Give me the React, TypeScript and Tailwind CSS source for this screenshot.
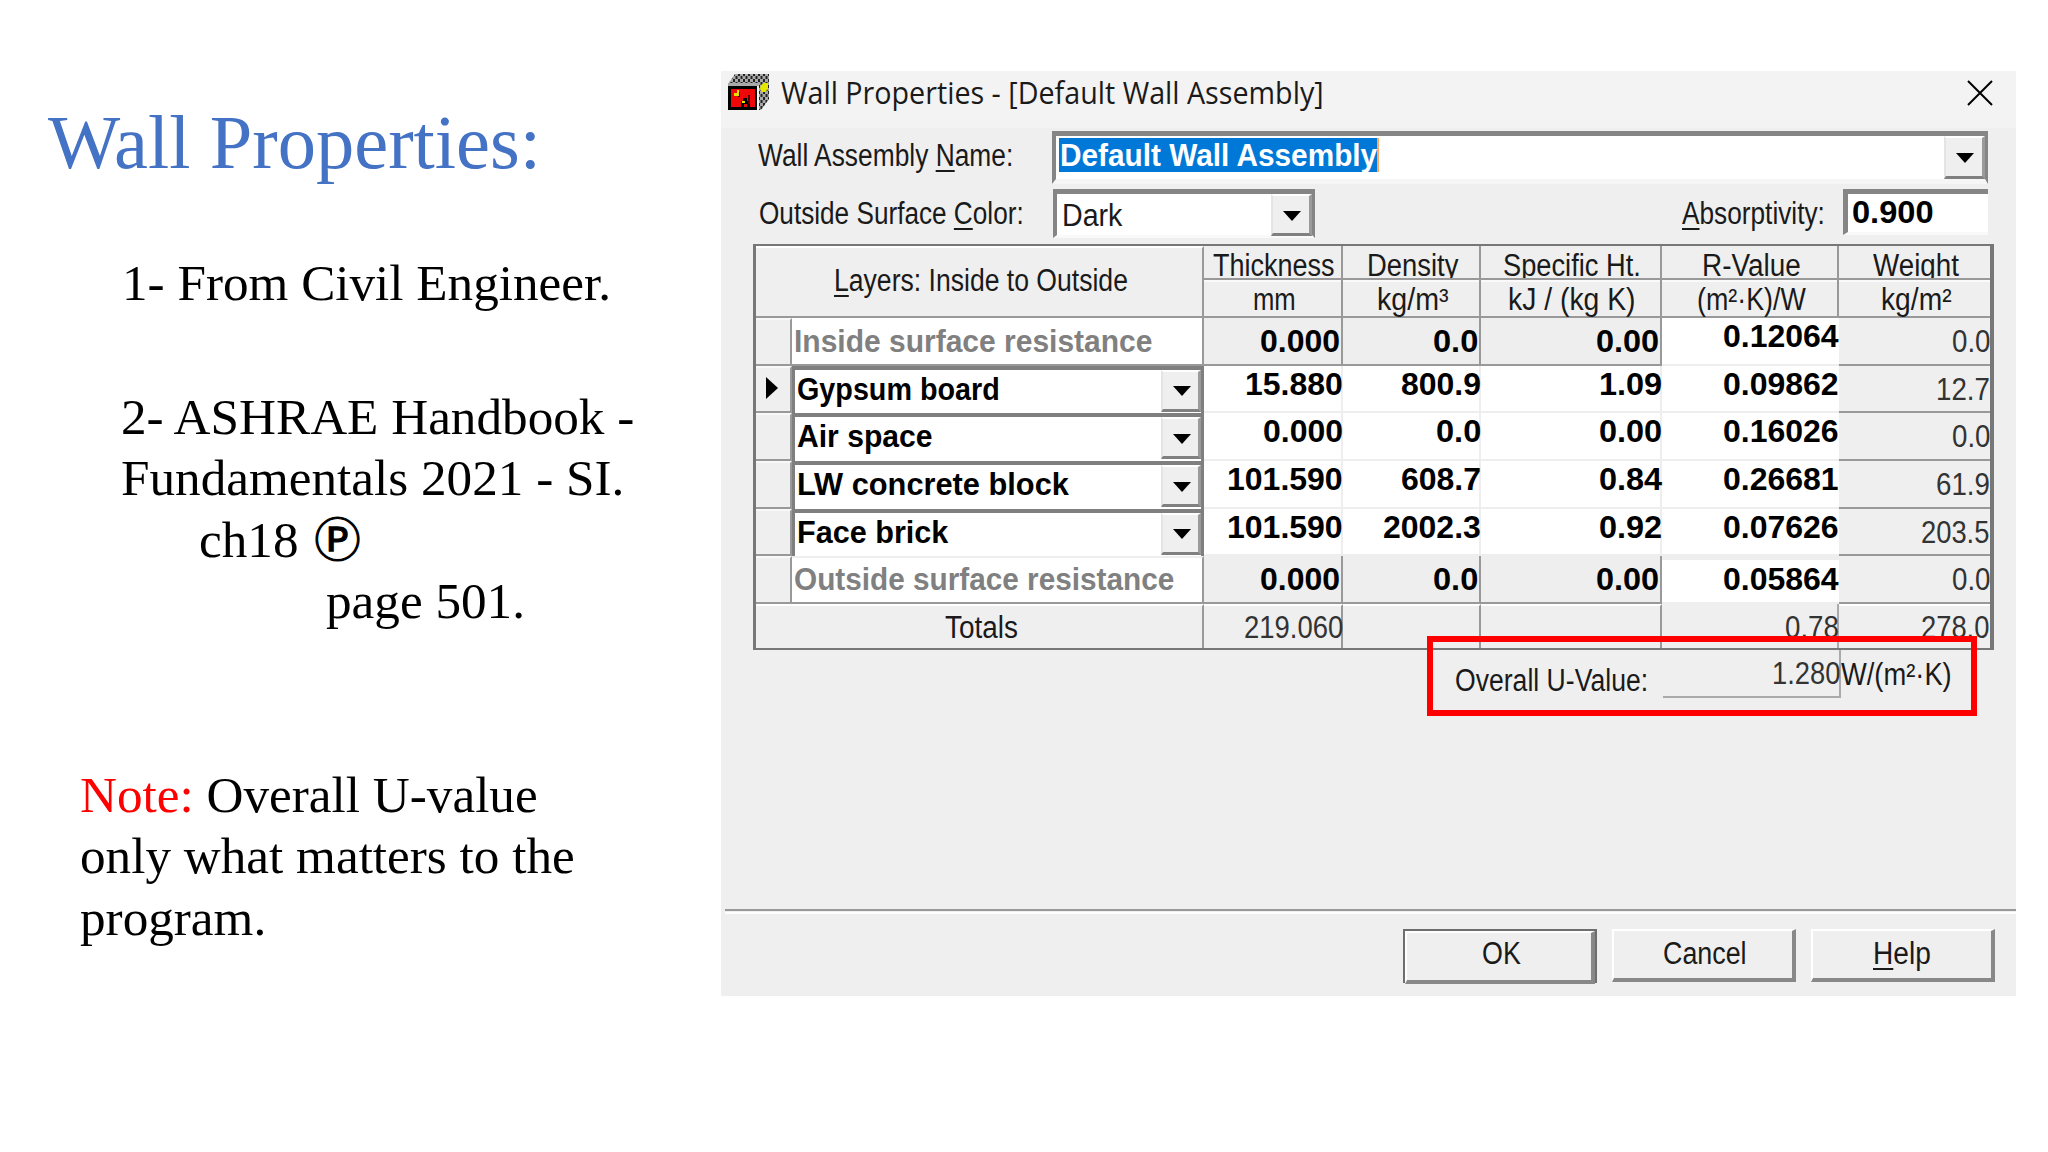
import React, { FC, ReactNode, useLayoutEffect, useRef } from "react";

// Squeezes or stretches a label horizontally so that it fills the given width
const Label: FC<{ width: number; className?: string; children: ReactNode }> = ({
  width,
  className = "",
  children,
}) => {
  const ref = useRef<HTMLSpanElement>(null);

  useLayoutEffect(() => {
    const el = ref.current;
    if (!el) return;
    el.style.transform = `scaleX(${width / el.offsetWidth})`;
  }, [width]);

  return (
    <span
      className={`block h-9 shrink-0 text-[31px] leading-[38px] whitespace-nowrap ${className}`}
      style={{ width }}
    >
      <span ref={ref} className="inline-block origin-left">
        {children}
      </span>
    </span>
  );
};

const Key: FC<{ children: ReactNode }> = ({ children }) => (
  <span className="underline decoration-2 underline-offset-[4px]">
    {children}
  </span>
);

const DropButton: FC<{ className?: string }> = ({ className = "" }) => (
  <div
    className={`flex shrink-0 items-center justify-center border-t-2 border-l-2 border-r-3 border-b-3 border-t-white border-l-[#e4e4e4] border-r-[#9a9a9a] border-b-[#808080] bg-[#efefef] ${className}`}
  >
    <svg width="20" height="12" viewBox="0 0 20 12" className="mt-0.5 ml-0.5">
      <path d="M1 1h18l-9 10z" fill="#000" />
    </svg>
  </div>
);

type Layer = {
  name: string;
  width: number;
  values: [string, string, string, string];
  weight: string;
  surface?: boolean;
};

const layers: Layer[] = [
  { name: "Inside surface resistance", width: 358, values: ["0.000", "0.0", "0.00", "0.12064"], weight: "0.0", surface: true },
  { name: "Gypsum board", width: 203, values: ["15.880", "800.9", "1.09", "0.09862"], weight: "12.7" },
  { name: "Air space", width: 136, values: ["0.000", "0.0", "0.00", "0.16026"], weight: "0.0" },
  { name: "LW concrete block", width: 272, values: ["101.590", "608.7", "0.84", "0.26681"], weight: "61.9" },
  { name: "Face brick", width: 151, values: ["101.590", "2002.3", "0.92", "0.07626"], weight: "203.5" },
  { name: "Outside surface resistance", width: 380, values: ["0.000", "0.0", "0.00", "0.05864"], weight: "0.0", surface: true },
];

const columns = [
  { title: "Thickness", titleWidth: 122, unit: "mm", unitWidth: 43 },
  { title: "Density", titleWidth: 91, unit: "kg/m³", unitWidth: 72 },
  { title: "Specific Ht.", titleWidth: 138, unit: "kJ / (kg K)", unitWidth: 128 },
  { title: "R-Value", titleWidth: 99, unit: "(m²·K)/W", unitWidth: 109 },
  { title: "Weight", titleWidth: 86, unit: "kg/m²", unitWidth: 71 },
];

const GRID = "grid grid-cols-[448px_139px_138px_181px_177px_151px]";

// A point takes half the width of a digit, the light face is narrower
const boldWidth = (text: string) => (text.length - 1) * 17.6 + 10;
const lightWidth = (text: string) => (text.length - 1) * 15.2 + 8;

const Value: FC<{ text: string }> = ({ text }) => (
  <Label width={boldWidth(text)} className="font-bold text-black">
    {text}
  </Label>
);

const LightValue: FC<{ text: string }> = ({ text }) => (
  <Label width={lightWidth(text)} className="text-[#333]">
    {text}
  </Label>
);

const LayerRow: FC<{ layer: Layer; active: boolean; last: boolean }> = ({
  layer,
  active,
  last,
}) => (
  <div className={`${GRID} h-[47.7px]`}>
    <div className="flex min-h-0">
      <div className="flex w-9 shrink-0 items-center border-r-2 border-b-2 border-[#999] border-t-2 border-t-[#f8f8f8] pl-[9px]">
        {active && (
          <svg width="14" height="24" viewBox="0 0 14 24" className="-mt-1">
            <path d="M1 1l12 11L1 23z" fill="#000" />
          </svg>
        )}
      </div>
      {layer.surface ? (
        <div
          className={`flex w-[412px] border-r-2 border-b-2 border-[#999] bg-white pt-[5px] pl-0.5 ${last ? "border-t-2 border-t-[#eee]" : ""}`}
        >
          <Label
            width={layer.width}
            className={`font-bold text-[#808080] ${last ? "-mt-0.5" : ""}`}
          >
            {layer.name}
          </Label>
        </div>
      ) : (
        <div className="flex w-[412px] border-t-4 border-r-3 border-l-3 border-[#7f7f7f] bg-white">
          <Label
            width={layer.width}
            className="mt-px mr-auto ml-0.5 font-bold text-black"
          >
            {layer.name}
          </Label>
          <DropButton className="h-[42px] w-[40px]" />
        </div>
      )}
    </div>
    {layer.values.map((value, i) =>
      layer.surface && i < 3 ? (
        <div
          key={i}
          className="flex justify-end border-r-2 border-b-2 border-[#999] bg-[#eee] pt-[5px] pr-[1px]"
        >
          <Value text={value} />
        </div>
      ) : (
        <div
          key={i}
          className={`flex justify-end border-b-2 border-[#eee] bg-white ${i < 3 ? "border-r-2" : ""} ${last ? "border-t-4 pt-px" : ""}`}
        >
          <div className={i < 3 ? "-mr-0.5" : ""}>
            <Value text={value} />
          </div>
        </div>
      )
    )}
    <div className="flex justify-end border-b-2 border-[#999] pt-[5px]">
      <LightValue text={layer.weight} />
    </div>
  </div>
);

const LayerTable = () => (
  <div className="ml-8 h-[406px] w-[1241px] border-t-2 border-r-4 border-b-2 border-l-3 border-[#777]">
    <div className={`${GRID} h-[72px]`}>
      <div className="border-t-2 border-r-2 border-b-2 border-[#999] border-t-white pt-[14px] pl-[78px]">
        <Label width={294}>
          <Key>L</Key>ayers: Inside to Outside
        </Label>
      </div>
      {columns.map((column, i) => (
        <div
          key={column.title}
          className={`flex flex-col border-[#999] ${i < 4 ? "border-r-2" : ""}`}
        >
          <div className="flex h-[34px] justify-center overflow-hidden border-b-2 border-[#999] pt-px pl-[3px]">
            <Label width={column.titleWidth}>{column.title}</Label>
          </div>
          <div className="flex h-[38px] justify-center border-t-2 border-b-2 border-[#999] border-t-[#fafafa] pl-[3px]">
            <Label width={column.unitWidth} className="-mt-px">
              {column.unit}
            </Label>
          </div>
        </div>
      ))}
    </div>
    {layers.map((layer, i) => (
      <LayerRow
        key={layer.name}
        layer={layer}
        active={i === 1}
        last={i === layers.length - 1}
      />
    ))}
    <div className={`${GRID} h-[44px]`}>
      <div className="flex justify-center border-t-2 border-r-2 border-[#999] border-t-white pt-[3px] pl-1">
        <Label width={73}>Totals</Label>
      </div>
      <div className="flex justify-end border-t-2 border-r-2 border-[#999] border-t-white pt-[3px]">
        <div className="-mr-0.5">
          <LightValue text="219.060" />
        </div>
      </div>
      <div className="border-t-2 border-r-2 border-[#999] border-t-white" />
      <div className="border-t-2 border-r-2 border-[#999] border-t-white" />
      <div className="flex justify-end border-r-2 border-[#aaa] pt-[5px]">
        <div className="-mr-0.5">
          <LightValue text="0.78" />
        </div>
      </div>
      <div className="flex justify-end border-t-2 border-t-white pt-[3px]">
        <LightValue text="278.0" />
      </div>
    </div>
  </div>
);

const WallIcon = () => (
  <svg width="42" height="38" viewBox="0 0 42 38">
    <defs>
      <pattern id="bricks" width="5" height="6" patternUnits="userSpaceOnUse">
        <rect width="5" height="6" fill="#a8a8a8" />
        <path d="M0 0h2v3H0zM2.500 3h2v3h-2z" fill="#222" />
      </pattern>
    </defs>
    <path d="M7 1h34v25l-8 11h-2V11H0z" fill="url(#bricks)" />
    <path d="M0 10h31v3H0z" fill="#aaa" />
    <path d="M0 13h29v24H0z" fill="#000" />
    <path d="M3 16h24v18H3z" fill="#f00808" />
    <path d="M13 34v-6h2v-3h4v3h3v6h-3v-3h-3v3z" fill="#000" />
    <path d="M20 22h2v9h-2zM10 19h2v5h-2z" fill="#500" />
    <path d="M9 17h2v3H9zM6 20h5v3H6zM14 28h3v2h-3z" fill="#e6e000" />
    <path d="M33 12l3-2h4v6l-3 3h-3l-2-3z" fill="#e6e600" />
  </svg>
);

const PushButton: FC<{ className: string; children: ReactNode }> = ({
  className,
  children,
}) => (
  <button
    className={`flex h-[53px] justify-center border-t-2 border-l-2 border-r-4 border-b-4 border-t-white border-l-white border-r-[#888] border-b-[#888] bg-[#efefef] ${className}`}
  >
    {children}
  </button>
);

const WallDialog = () => (
  <div className="relative mt-[71px] flex h-[925px] w-[1295px] flex-col bg-[#efefef] font-['Liberation_Sans',Arial,sans-serif] text-[#1a1a1a]">
    <div className="flex h-[57px] shrink-0 bg-[#f3f3f3] pt-0.5 pl-[7px]">
      <WallIcon />
      <Label
        width={543}
        className="ml-[11px] font-['Open_Sans','Noto_Sans',sans-serif]"
      >
        Wall Properties - [Default Wall Assembly]
      </Label>
      <svg
        width="26"
        height="26"
        viewBox="0 0 26 26"
        className="mt-[7px] mr-[23px] ml-auto"
      >
        <path d="M1 1l24 24M25 1L1 25" stroke="#000" strokeWidth="2" />
      </svg>
    </div>

    <div className="flex h-[58px] shrink-0 pt-[3px]">
      <Label width={255} className="mt-1.5 mr-[39px] ml-[37px]">
        Wall Assembly <Key>N</Key>ame:
      </Label>
      <div className="flex h-[53px] w-[936px] border-t-5 border-r-3 border-b-5 border-l-4 border-[#858585] border-b-[#f6f6f6] bg-white">
        <div className="mt-0.5 mr-auto ml-[3px] h-[34px] border-r-2 border-[#ffa860] bg-[#0078d7] pl-px text-white">
          <Label width={317} className="-mt-px font-bold">
            Default Wall Assembly
          </Label>
        </div>
        <DropButton className="h-[43px] w-[41px]" />
      </div>
    </div>

    <div className="flex h-[58px] shrink-0 pt-[3px]">
      <Label width={265} className="mt-[6px] mr-[29px] ml-[38px]">
        Outside Surface <Key>C</Key>olor:
      </Label>
      <div className="flex h-[49px] w-[262px] border-t-5 border-r-3 border-b-3 border-l-4 border-[#858585] border-b-[#f9f9f9] bg-white">
        <Label width={60} className="mt-[3px] mr-auto ml-[5px]">
          Dark
        </Label>
        <DropButton className="h-[42px] w-[41px]" />
      </div>
      <Label width={143} className="mt-[6px] mr-[18px] ml-auto">
        <Key>A</Key>bsorptivity:
      </Label>
      <div className="mr-7 h-[46px] w-[145px] border-t-5 border-l-5 border-b-3 border-[#858585] border-b-[#f9f9f9] bg-white pl-[4px]">
        <Label width={82} className="font-bold text-black">
          0.900
        </Label>
      </div>
    </div>

    <LayerTable />

    <div className="flex h-12 shrink-0">
      <Label width={193} className="mt-3 mr-[15px] ml-[734px]">
        Overall U-Value:
      </Label>
      <div className="flex h-12 w-[178px] justify-end border-r-2 border-b-2 border-[#aaa] pt-[5px]">
        <div className="-mr-0.5">
          <LightValue text="1.280" />
        </div>
      </div>
      <Label width={111} className="mt-1.5">
        W/(m²·K)
      </Label>
    </div>

    <div className="mt-auto ml-1 h-[5px] border-t-2 border-b-2 border-[#999] border-b-white" />
    <div className="flex h-[82px] shrink-0 justify-end pt-[15px] pr-[21px]">
      <div className="mr-[15px] h-[54px] border-2 border-[#6e6e6e]">
        <PushButton className="h-[50px] w-[190px] border-r-[#777] border-b-[#777] pt-[2px] pl-1">
          <Label width={39}>OK</Label>
        </PushButton>
      </div>
      <PushButton className="mr-[15px] w-[184px] pt-[4px] pl-1">
        <Label width={84}>Cancel</Label>
      </PushButton>
      <PushButton className="w-[184px] pt-[4px]">
        <Label width={58}>
          <Key>H</Key>elp
        </Label>
      </PushButton>
    </div>

    {/* Highlight round the overall U-value */}
    <div className="absolute top-[565px] left-[706px] h-20 w-[550px] border-6 border-[#ff0000]" />
  </div>
);

const Notes = () => (
  <div className="w-[721px] shrink-0 pt-[101px] text-[51.2px] leading-[61.5px] whitespace-nowrap text-black">
    <h1 className="ml-12 text-[76.5px] leading-[84px] text-[#4472c4]">
      Wall Properties:
    </h1>
    <p className="mt-[67px] ml-[122px]">1- From Civil Engineer.</p>
    <div className="mt-[72px] ml-[121px]">
      <p>2- ASHRAE Handbook -</p>
      <p>Fundamentals 2021 - SI.</p>
      <p className="flex h-[61.5px] pl-[78px]">
        ch18
        <span className="-mt-[3px] ml-[16px] font-['Noto_Sans_CJK_JP',sans-serif] text-[46px] [-webkit-text-stroke:1.2px_black]">
          Ⓟ
        </span>
      </p>
      <p className="pl-[205px]">page 501.</p>
    </div>
    <p className="mt-[132px] ml-20">
      <span className="text-[#ff0000]">Note:</span> Overall U-value
      <br />
      only what matters to the
      <br />
      program.
    </p>
  </div>
);

const App = () => (
  <div className="flex h-[1152px] w-[2048px] overflow-hidden bg-white font-['Liberation_Serif','Times_New_Roman',serif]">
    <Notes />
    <WallDialog />
  </div>
);

export default App;
